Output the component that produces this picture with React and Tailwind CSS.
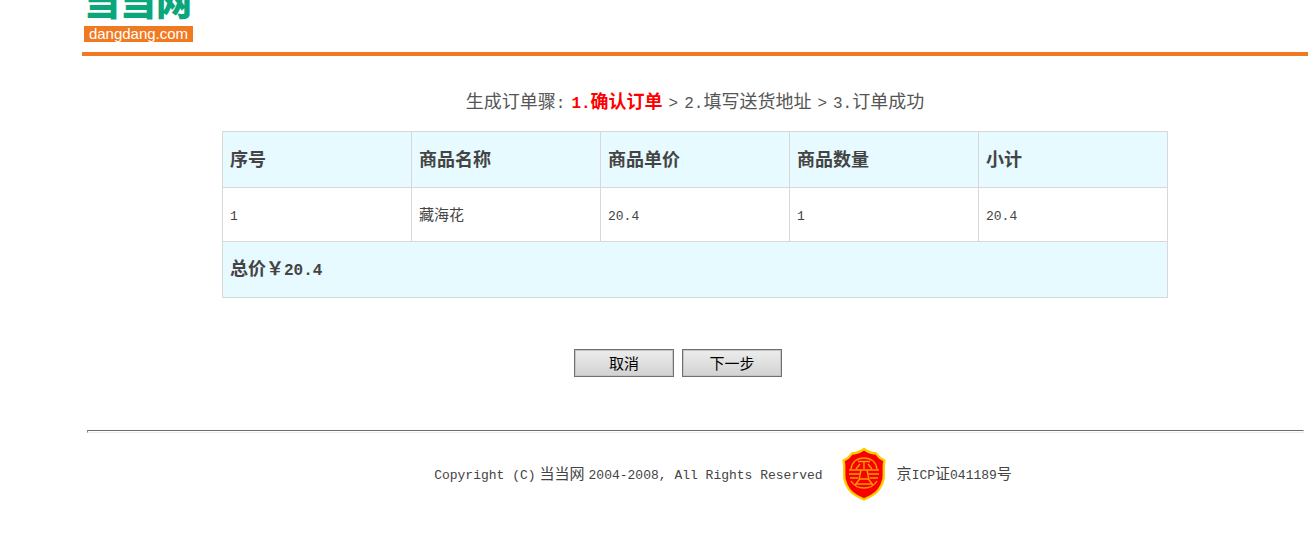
import { clsx } from 'clsx';

const columns = ['序号', '商品名称', '商品单价', '商品数量', '小计'];

const items = [
  { id: 1, name: '藏海花', price: 20.4, count: 1 },
];

// Latin text and digits
function Mono({ className, children }) {
  return (
    <span className={clsx("font-['Liberation_Mono',monospace]", className)}>{children}</span>
  );
}

function Logo() {
  return (
    <a href="#" aria-label="当当网" className="ml-0.5 block w-[109px]">
      <span className="flex h-[26px] items-end overflow-hidden pb-2 text-4xl leading-9 font-black whitespace-nowrap text-[#0aa77d]">
        当当网
      </span>
      <span className="flex h-4 items-center justify-center bg-[#f07a22] font-['Liberation_Sans',sans-serif] text-[15px] leading-4 text-white">
        dangdang.com
      </span>
    </a>
  );
}

function Steps() {
  return (
    <div className="flex items-baseline justify-center text-lg leading-7 text-[#555]">
      <span>生成订单骤</span>
      <Mono className="mr-1.5 text-base">:</Mono>
      <strong className="text-[#ff0000]">
        <Mono className="text-base">1.</Mono>确认订单
      </strong>
      <Mono className="mx-1.5 text-base">&gt;</Mono>
      <span><Mono className="text-base">2.</Mono>填写送货地址</span>
      <Mono className="mx-1.5 text-base">&gt;</Mono>
      <span><Mono className="text-base">3.</Mono>订单成功</span>
    </div>
  );
}

function OrderTable() {
  const total = items.reduce((sum, item) => sum + item.price * item.count, 0);
  const cell = 'border border-[#d8d8d8] px-[7px] text-left';

  return (
    <table className="w-full table-fixed border-collapse text-[#444]">
      <thead>
        <tr className="h-14 bg-[#e6faff] text-lg">
          {columns.map((column) => (
            <th key={column} className={clsx(cell, 'pb-1 font-bold')}>{column}</th>
          ))}
        </tr>
      </thead>
      <tbody>
        {items.map((item) => (
          <tr key={item.id} className="h-[54px] text-[15px]">
            <td className={cell}><Mono className="text-[13px]">{item.id}</Mono></td>
            <td className={cell}>{item.name}</td>
            <td className={cell}><Mono className="text-[13px]">{item.price}</Mono></td>
            <td className={cell}><Mono className="text-[13px]">{item.count}</Mono></td>
            <td className={cell}><Mono className="text-[13px]">{item.price * item.count}</Mono></td>
          </tr>
        ))}
      </tbody>
      <tfoot>
        <tr className="h-14 bg-[#e6faff] text-lg font-bold">
          <td colSpan={5} className={clsx(cell, 'pb-1')}>
            总价￥<Mono className="text-base">{total}</Mono>
          </td>
        </tr>
      </tfoot>
    </table>
  );
}

function FormButton({ children }) {
  return (
    <button
      type="button"
      className="h-7 w-[100px] border border-[#707070] bg-linear-to-b from-[#ededed] to-[#d2d2d2] text-[15px] leading-6 text-black inset-ring inset-ring-[#c4c4c4]"
    >
      {children}
    </button>
  );
}

function Shield() {
  return (
    <svg viewBox="0 0 50 58" className="h-[58px] w-[50px]" aria-hidden="true">
      <path
        d="M25 4 C28 6.5 32 8 37 8.5 L41 13 L45.5 15.5 C44 21 45.5 27 44.5 34 C42.5 43 38 48 32 51 L25 54.5 L18 51 C12 48 7.5 43 5.5 34 C4.5 27 6 21 4.5 15.5 L9 13 L13 8.5 C18 8 22 6.5 25 4 Z"
        fill="#f90000"
        stroke="#ffcc00"
        strokeWidth="2.4"
        strokeLinejoin="round"
      />
      <g fill="none" stroke="#ff9d00" strokeWidth="1.4">
        <path d="M12 24 C13 17 18 13 25 13 C32 13 37 17 38 24" />
        <path d="M19 16.5 H31 M25 16.5 V24 M17 24 L21 19 M33 24 L29 19" />
        <path d="M10 25 H40 M10 29 H21 M29 29 H40 M11 33 H19 M31 33 H39" />
        <path d="M22 25 L20 35 L16 40 M28 25 L30 35 L34 40 M20 34 H30" />
        <path d="M12 36 C15 41 20 43 25 43 C30 43 35 41 38 36" />
        <path d="M17 39 H33" />
      </g>
    </svg>
  );
}

function Footer() {
  return (
    <footer className="flex items-center justify-center pt-3 pl-14 text-[15px] leading-6 text-[#444]">
      <p className="flex items-baseline gap-1">
        <Mono className="text-[13px]">Copyright (C)</Mono>
        <span>当当网</span>
        <Mono className="text-[13px]">2004-2008, All Rights Reserved</Mono>
      </p>
      <span className="mr-2 ml-4">
        <Shield />
      </span>
      <p>
        京<Mono className="text-[13px]">ICP</Mono>证<Mono className="text-[13px]">041189</Mono>号
      </p>
    </footer>
  );
}

export default function App() {
  return (
    <div className="min-h-screen bg-white pl-[82px] font-['Noto_Sans_CJK_SC',sans-serif]">
      <header className="border-b-4 border-[#f07a22] pb-2.5">
        <Logo />
      </header>
      <main className="px-[140px] pt-[30px]">
        <Steps />
        <div className="pt-[15px]">
          <OrderTable />
        </div>
        <div className="flex justify-center gap-2 pt-[51px] pr-[34px]">
          <FormButton>取消</FormButton>
          <FormButton>下一步</FormButton>
        </div>
      </main>
      <hr className="mt-[53px] mr-1 ml-[5px] h-[3px] border border-t-[#6c6c6c] border-r-[#eee] border-b-[#eee] border-l-[#8a8a8a]" />
      <Footer />
    </div>
  );
}
